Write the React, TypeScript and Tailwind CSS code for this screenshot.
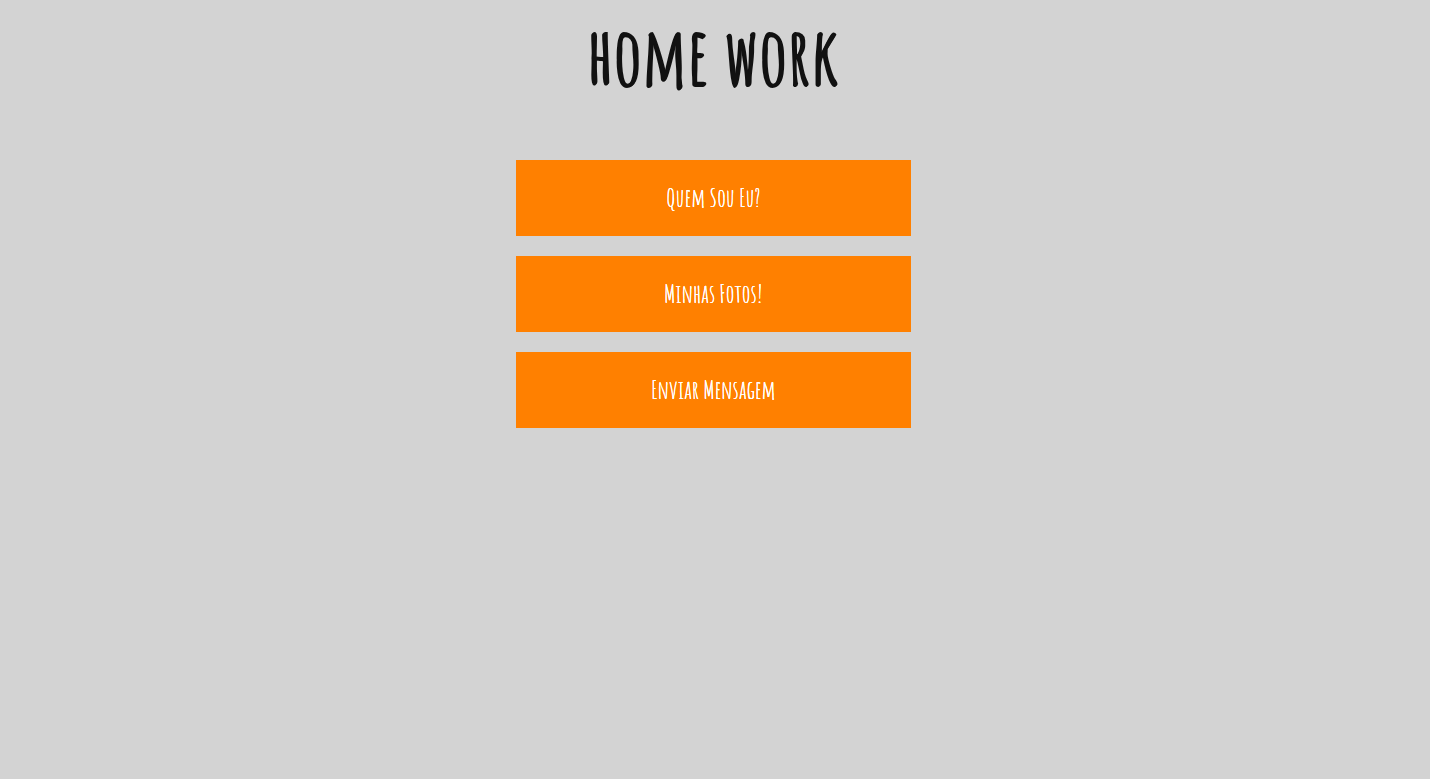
const links = [
  { label: 'Quem Sou Eu?', href: '#quem-sou-eu' },
  { label: 'Minhas Fotos!', href: '#minhas-fotos' },
  { label: 'Enviar Mensagem', href: '#enviar-mensagem' },
];

export default function App() {
  return (
    <main className="flex min-h-screen flex-col items-center bg-[#d3d3d3] pr-[3px] font-['Amatic_SC','Liberation_Sans',sans-serif]">
      <h1 className="pt-[15px] text-[80px] leading-[80px] font-bold whitespace-nowrap text-[#111] [text-shadow:-1px_1px_#111]">home work</h1>
      <nav className="mt-[65px] flex w-full max-w-[395px] flex-col gap-5">
        {links.map((link) => (
          <a
            key={link.href}
            href={link.href}
            className="flex h-[76px] items-center justify-center bg-[#ff8000] text-[25px] whitespace-nowrap text-white [text-shadow:0_0_#fff,0_0_#fff]"
          >
            {link.label}
          </a>
        ))}
      </nav>
    </main>
  );
}
